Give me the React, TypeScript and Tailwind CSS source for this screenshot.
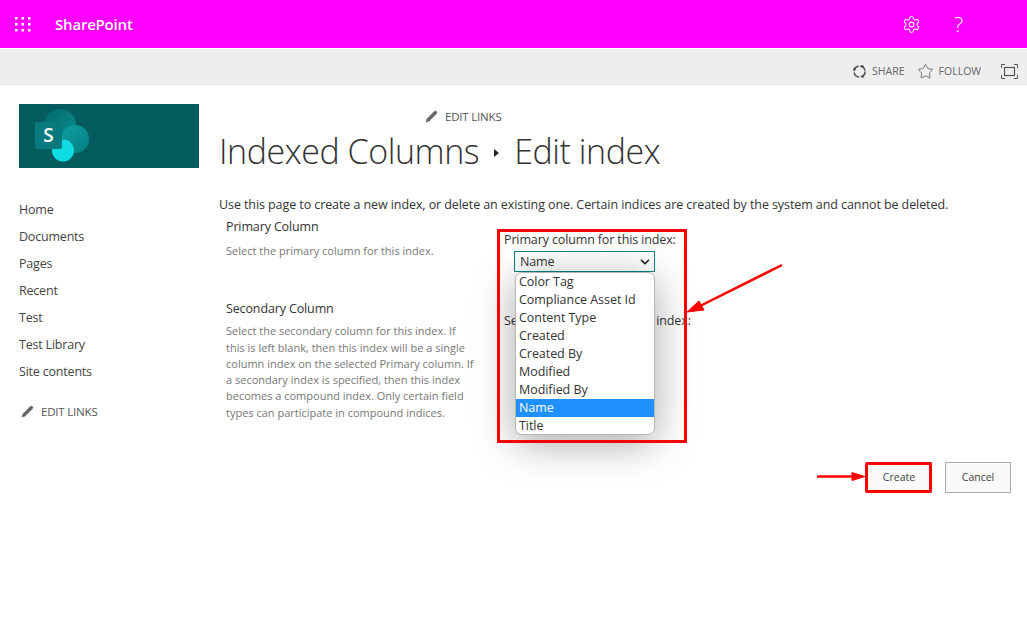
import { Settings, Star, Pencil, ChevronDown } from 'lucide-react';

const navItems = ['Home', 'Documents', 'Pages', 'Recent', 'Test', 'Test Library', 'Site contents'];
const options = ['Color Tag', 'Compliance Asset Id', 'Content Type', 'Created', 'Created By', 'Modified', 'Modified By', 'Name', 'Title'];

function SiteLogo() {
  return (
    <div className="w-[180px] h-[64px] bg-[#045c5e] pl-[16px] pt-[5px]">
      <svg width="56" height="54" viewBox="0 0 56 54">
        <defs>
          <linearGradient id="a" x1="0" y1="0" x2="1" y2="1">
            <stop offset="0" stopColor="#04696b" />
            <stop offset="1" stopColor="#0a8f93" />
          </linearGradient>
          <linearGradient id="b" x1="0" y1="0" x2="1" y2="1">
            <stop offset="0" stopColor="#0b9ea2" />
            <stop offset="1" stopColor="#077f83" />
          </linearGradient>
        </defs>
        <circle cx="25" cy="16" r="16" fill="url(#a)" />
        <circle cx="40" cy="30" r="14" fill="url(#b)" />
        <circle cx="28" cy="41.5" r="11" fill="#0fdbe3" />
        <rect x="0" y="13" width="27" height="27" rx="2" fill="#087a7e" />
        <text x="13.5" y="33" textAnchor="middle" fontSize="19" fontWeight="600" fill="#fff" fontFamily="'Open Sans', sans-serif">S</text>
      </svg>
    </div>
  );
}

function EditLinks() {
  return (
    <span className="flex items-center gap-[7px] text-[11.5px] text-[#555] tracking-[-0.2px]">
      <Pencil className="w-[13px] h-[13px] text-[#666] fill-[#666]" strokeWidth={1} />
      EDIT LINKS
    </span>
  );
}

export default function App() {
  return (
    <div className="w-[1027px] h-[623px] relative overflow-hidden bg-white font-['Open_Sans',sans-serif] text-[#333]">
      <header className="h-[48px] bg-[#ff00ff] flex items-center text-white">
        <svg className="ml-[15px]" width="16" height="15" viewBox="0 0 16 15" fill="#fff">
          <rect x="0" y="0" width="2.5" height="2.5" />
          <rect x="6.5" y="0" width="2.5" height="2.5" />
          <rect x="13" y="0" width="2.5" height="2.5" />
          <rect x="0" y="6" width="2.5" height="2.5" />
          <rect x="6.5" y="6" width="2.5" height="2.5" />
          <rect x="13" y="6" width="2.5" height="2.5" />
          <rect x="0" y="12" width="2.5" height="2.5" />
          <rect x="6.5" y="12" width="2.5" height="2.5" />
          <rect x="13" y="12" width="2.5" height="2.5" />
        </svg>
        <span className="ml-[24px] text-[15px] font-semibold tracking-[-0.2px]">SharePoint</span>
        <Settings className="w-[19px] h-[19px] ml-auto" strokeWidth={1.3} />
        <span className="ml-[33px] mr-[64px] text-[21px] font-light leading-none">?</span>
      </header>

      <div className="mt-[1px] h-[36px] bg-[#eeeeee] border-b border-[#e4e4e4] flex items-center justify-end text-[10.5px] text-[#666] pt-[10px]">
        <span className="flex items-center gap-[5px]">
          <svg width="15" height="15" viewBox="0 0 15 15" fill="none" stroke="#555" strokeWidth="1.6">
            <circle cx="7.5" cy="7.5" r="5.5" strokeDasharray="7 1.6" />
            <circle cx="2.6" cy="5" r="1.3" fill="#555" stroke="none" />
            <circle cx="10.5" cy="2.6" r="1.3" fill="#555" stroke="none" />
            <circle cx="10.8" cy="12.5" r="1.3" fill="#555" stroke="none" />
          </svg>
          SHARE
        </span>
        <span className="flex items-center gap-[5px] ml-[12px]">
          <Star className="w-[17px] h-[17px] text-[#555]" strokeWidth={1.1} />
          FOLLOW
        </span>
        <svg className="ml-[20px] mr-[9px]" width="17" height="15" viewBox="0 0 17 15" fill="none" stroke="#555">
          <path d="M.5 4V.5H4M13 .5h3.5V4M16.5 11v3.5H13M4 14.5H.5V11" />
          <rect x="3.5" y="3.5" width="10" height="8" strokeWidth="1.2" />
        </svg>
      </div>

      <div className="flex">
        <aside className="w-[219px] pl-[19px] pt-[19px] shrink-0">
          <SiteLogo />
          <nav className="mt-[32px] flex flex-col gap-[7px] text-[12.5px] text-[#444] tracking-[-0.2px]">
            {navItems.map((item) => (
              <span key={item} className="h-[20px] leading-[20px]">{item}</span>
            ))}
          </nav>
          <div className="mt-[21px] pl-[2px]">
            <EditLinks />
          </div>
        </aside>

        <main className="flex-1 pr-[16px]">
          <div className="pl-[206px] pt-[23px]">
            <EditLinks />
          </div>
          <h1 className="mt-[3px] h-[46px] flex items-center text-[34px] font-light text-[#333] leading-[46px] tracking-[-0.45px] whitespace-nowrap">
            Indexed Columns
            <span className="mx-[15px] w-0 h-0 border-y-[4px] border-y-transparent border-l-[5px] border-l-[#222] mt-[4px]" />
            Edit index
          </h1>
          <p className="mt-[22px] text-[12.5px] leading-[18px] text-[#333] whitespace-nowrap tracking-[-0.085px]">
            Use this page to create a new index, or delete an existing one. Certain indices are created by the system and cannot be deleted.
          </p>

          <div className="mt-[4px] flex pl-[7px]">
            <div className="w-[252px] shrink-0">
              <h2 className="text-[12.5px] leading-[18px] text-[#333] tracking-[-0.13px]">Primary Column</h2>
              <p className="mt-[6px] text-[11px] leading-[18px] text-[#777]">Select the primary column for this index.</p>
              <h2 className="mt-[40px] text-[12.5px] leading-[18px] text-[#333] tracking-[-0.13px]">Secondary Column</h2>
              <p className="mt-[5px] w-[248px] text-[11px] leading-[16.3px] text-[#777]">
                Select the secondary column for this index. If this is left blank, then this index will be a single column index on the selected Primary column. If a secondary index is specified, then this index becomes a compound index. Only certain field types can participate in compound indices.
              </p>
            </div>
            <div className="pl-[26px] pt-[13px] text-[12.5px] leading-[18px] text-[#333] tracking-[-0.13px]">
              <p className="whitespace-nowrap">Primary column for this index:</p>
              <div className="ml-[10px] mt-[2px] w-[141px] h-[21px] border border-[#038387] flex items-center justify-between pl-[5px] pr-[2px]">
                Name
                <ChevronDown className="w-[14px] h-[14px] text-[#222]" strokeWidth={3} />
              </div>
              <p className="mt-[40px] whitespace-nowrap">Secondary column for this index:</p>
            </div>
          </div>

          <div className="mt-[41px] flex justify-end gap-[13px]">
            <button className="w-[66px] h-[31px] pt-[1px] bg-[#fafafa] border border-[#ababab] text-[10.5px] text-[#444]">Create</button>
            <button className="w-[66px] h-[31px] pt-[1px] bg-[#fafafa] border border-[#ababab] text-[10.5px] text-[#444]">Cancel</button>
          </div>
        </main>
      </div>

      {/* open select list + annotations sit over the page */}
      <div className="absolute left-[515px] top-[272px] w-[140px] h-[163px] bg-white border border-[#b5b5b5] rounded-[7px] overflow-hidden text-[12.5px] text-[#333] tracking-[-0.05px] shadow-[0_8px_40px_rgba(0,0,0,0.35)]">
        {options.map((o) => (
          <div key={o} className={o === 'Name' ? 'h-[18px] leading-[18px] pl-[3px] bg-[#1e90ff] text-white' : 'h-[18px] leading-[18px] pl-[3px]'}>
            {o}
          </div>
        ))}
      </div>
      <div className="absolute left-[497px] top-[229px] w-[190px] h-[214px] border-[3px] border-[#ff0000]" />
      <div className="absolute left-[865px] top-[462px] w-[67px] h-[31px] border-[3px] border-[#ff0000] rounded-[2px]" />
      <svg className="absolute left-0 top-0 pointer-events-none" width="1027" height="623" fill="#ff0000" stroke="#ff0000">
        <line x1="782" y1="265" x2="700" y2="306" strokeWidth="2.5" />
        <polygon points="687,312 699,301 704,310" />
        <line x1="817" y1="476.5" x2="852" y2="476.5" strokeWidth="2.5" />
        <polygon points="865,476.5 852,472.5 852,480.5" />
      </svg>
    </div>
  );
}
